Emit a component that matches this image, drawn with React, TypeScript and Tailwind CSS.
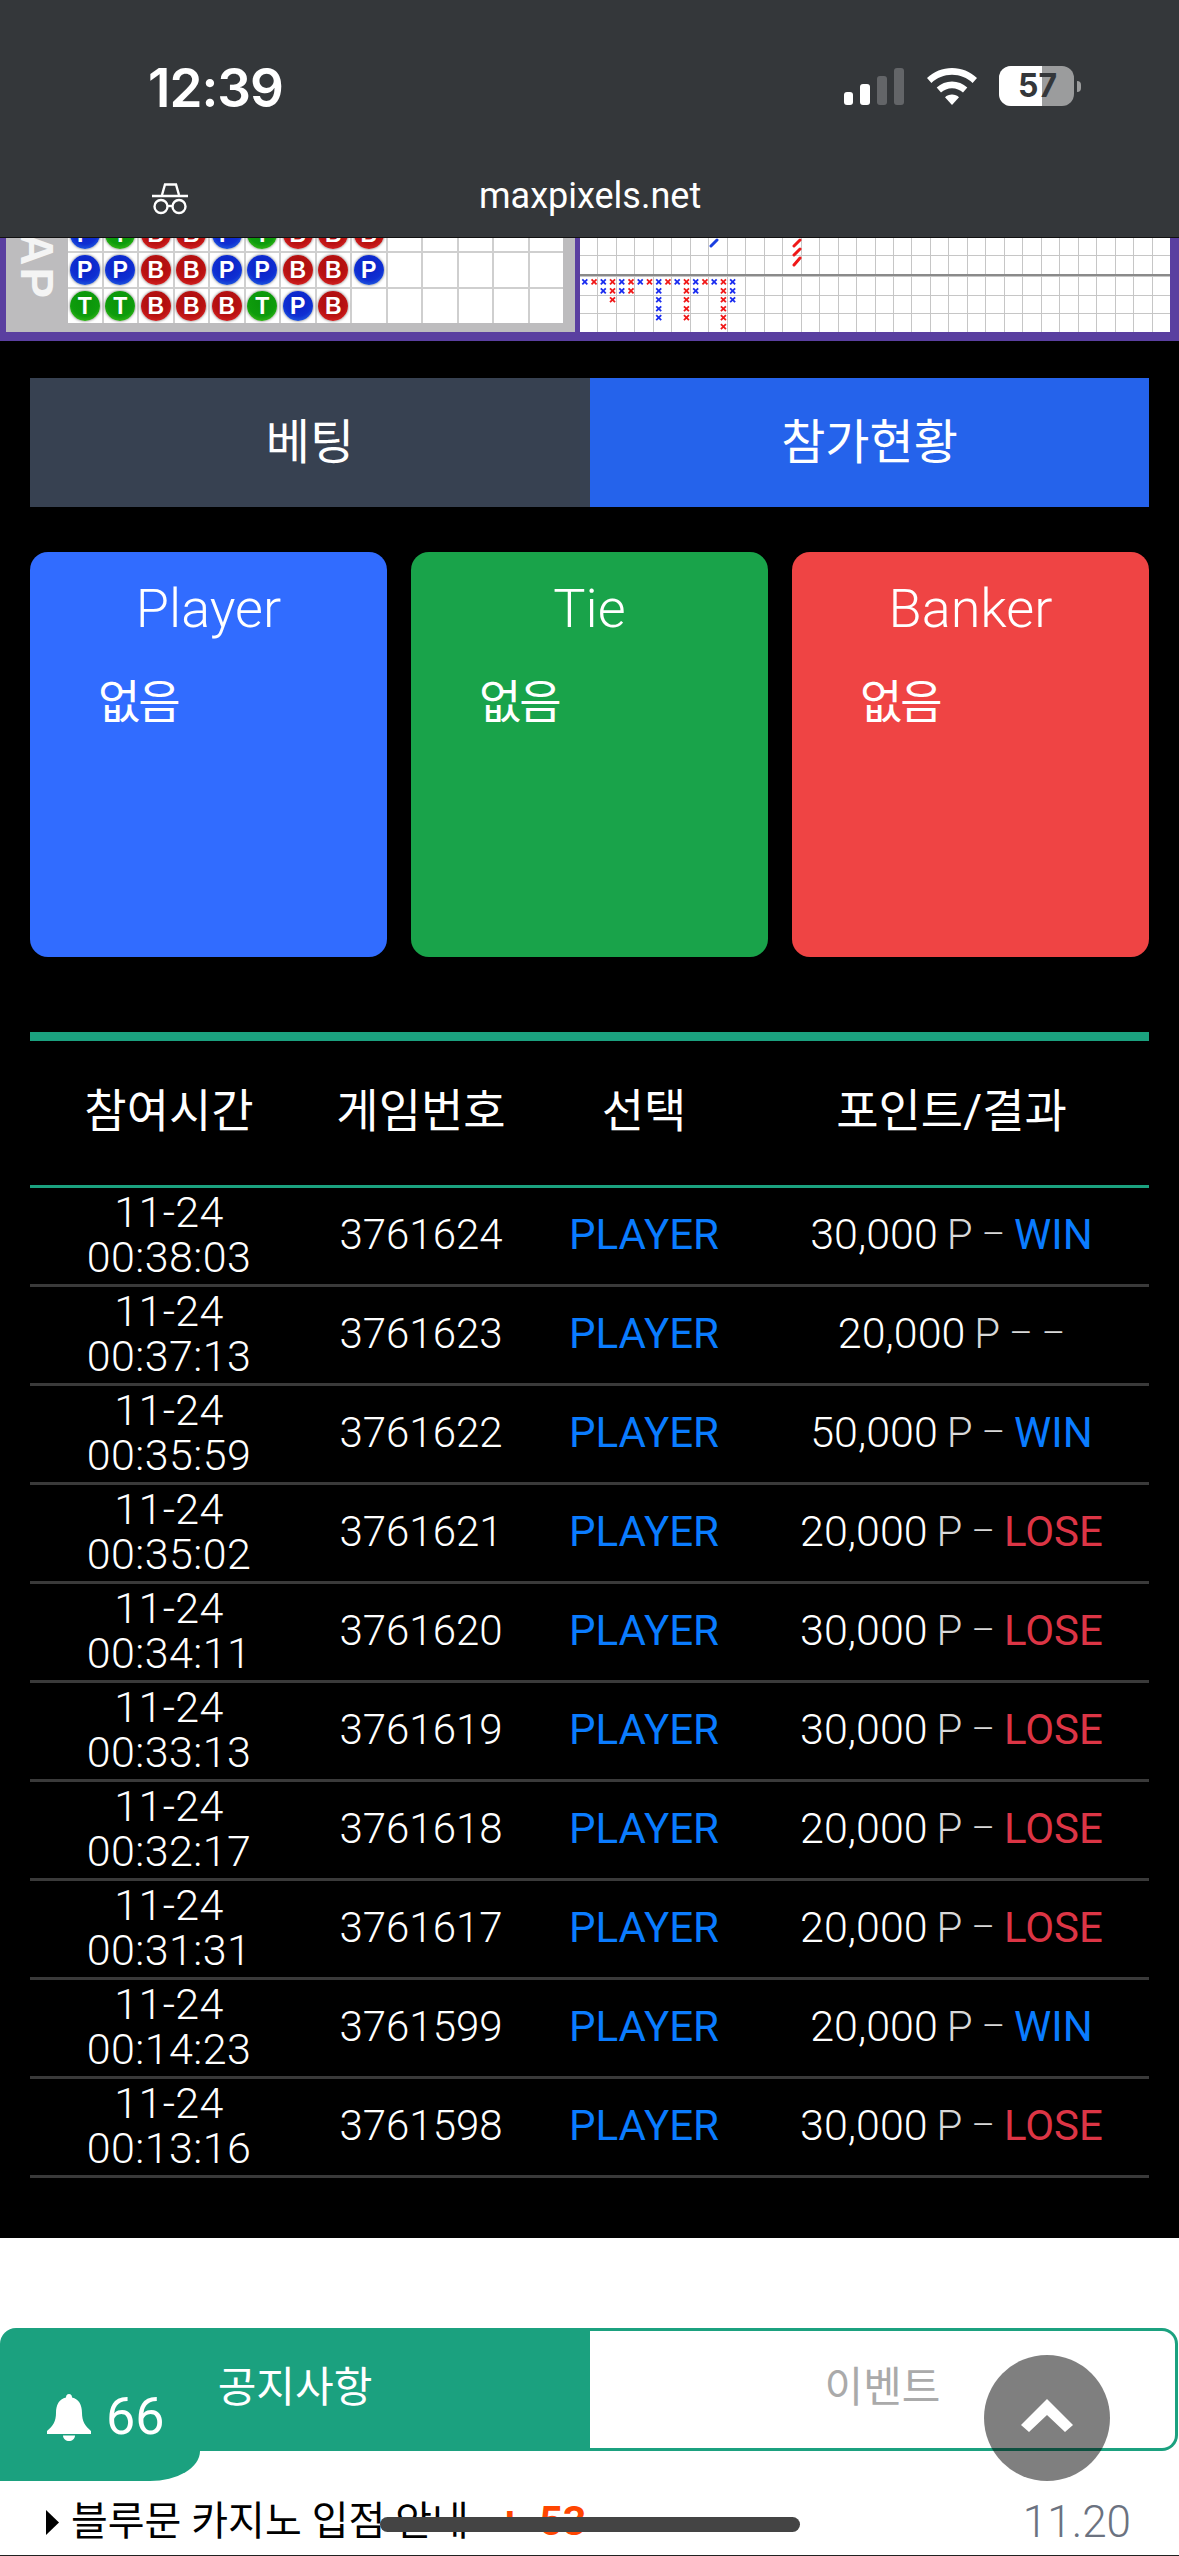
import React from 'react';

const KR = "[font-family:Roboto,'Noto_Sans_CJK_KR',sans-serif]";

const leftRows = ['PTBBPTBBB', 'PPBBPPBBP', 'TTBBBTPB'];

const rows = [
  ['00:38:03', '3761624', '30,000', 'WIN'],
  ['00:37:13', '3761623', '20,000', '-'],
  ['00:35:59', '3761622', '50,000', 'WIN'],
  ['00:35:02', '3761621', '20,000', 'LOSE'],
  ['00:34:11', '3761620', '30,000', 'LOSE'],
  ['00:33:13', '3761619', '30,000', 'LOSE'],
  ['00:32:17', '3761618', '20,000', 'LOSE'],
  ['00:31:31', '3761617', '20,000', 'LOSE'],
  ['00:14:23', '3761599', '20,000', 'WIN'],
  ['00:13:16', '3761598', '30,000', 'LOSE'],
];

// half-cell index -> colour, per half-row of the bottom road
const marks = [
  'BRBRBRBRBRBRBRBRB',
  '..BRBR..B..RB..RB',
  '...R....B..R...RB',
  '........B..R...R.',
  '........B..R...R.',
  '...............R.',
];

const Ball = ({ k }: { k: string }) => {
  const bg =
    k === 'P'
      ? 'bg-[radial-gradient(circle_at_50%_38%,#0a1fc4_0%,#0f2fd2_58%,#2f7ee8_100%)]'
      : k === 'B'
        ? 'bg-[radial-gradient(circle_at_50%_38%,#a30d0d_0%,#bb1212_58%,#e83030_100%)]'
        : 'bg-[radial-gradient(circle_at_50%_38%,#0a930a_0%,#0e9c0c_58%,#55cc22_100%)]';
  return (
    <div className={`w-[30px] h-[30px] rounded-full flex items-center justify-center text-white text-[23px] font-bold leading-none shadow-[0_0_3px_rgba(0,0,0,0.6)] font-['Liberation_Sans',sans-serif] ${bg}`}>
      {k}
    </div>
  );
};

const LeftRoad = () => (
  <div className="flex flex-col gap-[2px] bg-[#cfcfcf]">
    {leftRows.map((r, i) => (
      <div key={i} className={`flex gap-[2px] ${i === 0 ? 'h-[14px] items-end overflow-hidden' : 'h-[34px]'}`}>
        {Array.from({ length: 14 }).map((_, c) => (
          <div key={c} className="w-[33.5px] h-[34px] shrink-0 bg-white flex justify-center items-center">
            {r[c] ? <Ball k={r[c]} /> : null}
          </div>
        ))}
      </div>
    ))}
  </div>
);

const GridCells = ({ h, n }: { h: number; n: number }) => (
  <div className="flex flex-col gap-[1px]">
    {Array.from({ length: n }).map((_, r) => (
      <div key={r} className="flex gap-[1px]" style={{ height: h }}>
        {Array.from({ length: 32 }).map((_, c) => (
          <div key={c} className="flex-1 bg-white" />
        ))}
      </div>
    ))}
  </div>
);

const RightRoad = () => (
  <div className="flex-1 flex flex-col bg-[#c6c6c6] min-w-0">
    <div className="relative">
      <GridCells h={18} n={2} />
      <svg className="absolute inset-0 w-full h-full" viewBox="0 0 590 37" preserveAspectRatio="none">
        <g strokeWidth="3" strokeLinecap="round">
          <path d="M131 9 L137 3" stroke="#1a3fe0" />
          <path d="M214 9 L220 3 M214 18 L220 12 M214 28 L220 21" stroke="#f01818" />
        </g>
      </svg>
    </div>
    <div className="h-[2px] bg-[#8a8a8a]" />
    <div className="relative mt-[1px]">
      <GridCells h={17.6} n={3} />
      <svg className="absolute inset-0 w-full h-full" viewBox="0 0 590 56" preserveAspectRatio="none">
        {marks.flatMap((row, ry) =>
          row.split('').map((m, cx) =>
            m === '.' ? null : (
              <g key={`${ry}-${cx}`} stroke={m === 'B' ? '#1a2cf0' : '#f01818'} strokeWidth="1.8">
                <path d={`M${4.8 + cx * 9.24 - 2.5} ${5 + ry * 9.14 - 2.5} l5 5 m0 -5 l-5 5`} />
              </g>
            ),
          ),
        )}
      </svg>
    </div>
  </div>
);

const IncognitoIcon = () => (
  <svg width="36" height="32" viewBox="0 0 36 32" fill="none" stroke="#fff" strokeWidth="2.4">
    <path d="M10 12 L13 1.5 H24 L27 12" />
    <path d="M0 13 H36" />
    <circle cx="9" cy="23.5" r="6.5" />
    <circle cx="27" cy="23.5" r="6.5" />
    <path d="M15 23 H21" />
  </svg>
);

const StatusIcons = () => (
  <div className="flex items-start">
    <div className="flex items-end gap-[7px] h-[37px] mt-[2px]">
      <div className="w-[9px] h-[13px] rounded-[3px] bg-white" />
      <div className="w-[10px] h-[21px] rounded-[3px] bg-white" />
      <div className="w-[10px] h-[29px] rounded-[3px] bg-[#636568]" />
      <div className="w-[10px] h-[37px] rounded-[3px] bg-[#636568]" />
    </div>
    <svg className="ml-[23px] mt-[2px]" width="50" height="37" viewBox="0 0 50 37" fill="#fff">
      <path d="M25 0 C34.5 0 43 3.6 50 10 L45.6 15 C40 9.8 33 6.8 25 6.8 C17 6.8 10 9.8 4.4 15 L0 10 C7 3.6 15.5 0 25 0 Z" />
      <path d="M25 13.5 C30.8 13.5 36 15.7 40.3 19.6 L36 24.5 C33 21.8 29.2 20.2 25 20.2 C20.8 20.2 17 21.8 14 24.5 L9.7 19.6 C14 15.7 19.2 13.5 25 13.5 Z" />
      <path d="M25 26.5 C27.8 26.5 30.2 27.5 32 29.3 L25 37 L18 29.3 C19.8 27.5 22.2 26.5 25 26.5 Z" />
    </svg>
    <div className="ml-[22px] relative w-[75px] h-[40px] rounded-[12px] overflow-hidden bg-[#9b9c9d] flex">
      <div className="w-[43px] h-full bg-white" />
      <div className="absolute inset-0 flex items-center justify-center pl-[2px] text-[#34373a] text-[32px] font-bold font-['Inter',sans-serif] leading-none">57</div>
    </div>
    <div className="ml-[3px] mt-[15px] w-[4px] h-[11px] rounded-r-full bg-[#9b9c9d]" />
  </div>
);

const Cell = ({ title, bg }: { title: string; bg: string }) => (
  <div className={`flex-1 h-[405px] rounded-[18px] text-white pt-[28px] ${bg}`}>
    <div className="text-center text-[54px] font-[350] leading-[58px]">{title}</div>
    <div className="pl-[68px] pt-[32px] text-[46px] leading-[64px] tracking-[-2px]">없음</div>
  </div>
);

const Result = ({ pts, res }: { pts: string; res: string }) => (
  <div className="flex justify-center items-center gap-[9px]">
    <span className="text-white text-[43px]">{pts}</span>
    <span className="text-[#d8d8d8]">P</span>
    <span className="text-[#d8d8d8] text-[36px]">–</span>
    {res === 'WIN' && <span className="text-[#0a7cff] font-normal">WIN</span>}
    {res === 'LOSE' && <span className="text-[#dc3545] font-normal">LOSE</span>}
    {res === '-' && <span className="text-[#d8d8d8] text-[36px]">–</span>}
  </div>
);

export default function App() {
  return (
    <div className={`w-[1179px] h-[2556px] overflow-hidden bg-white ${KR}`}>
      {/* browser chrome */}
      <div className="h-[237px] bg-[#34373a] pt-[66px] pl-[148px] pr-[98px] text-white flex flex-col">
        <div className="flex justify-between">
          <div className="text-[53px] leading-[44px] font-semibold tracking-[-1px] font-['Inter',sans-serif]">12:39</div>
          <StatusIcons />
        </div>
        <div className="mt-[73px] flex items-center h-[32px] ml-[4px] -mr-[98px]">
          <IncognitoIcon />
          <div className="ml-[291px] mb-[6px] text-[36px] leading-none">maxpixels.net</div>
        </div>
      </div>

      <div className="bg-black">
        {/* road maps */}
        <div className="h-[104px] overflow-hidden border-t border-[#111] bg-[#5a3fa0] flex flex-col justify-end pb-[9px] pl-[6px] pr-[9px]">
          <div className="flex h-[95px] items-end shrink-0">
            <div className="w-[569px] h-full bg-[#bdbcbe] flex items-start shrink-0 overflow-hidden">
              <div className="w-[62px] h-full relative overflow-hidden">
                <div className="absolute left-[14px] bottom-[32px] [writing-mode:vertical-rl] text-[#f4f4f4] text-[46px] font-bold leading-[34px] tracking-[2px] font-['Liberation_Sans',sans-serif]">MAP</div>
              </div>
              <LeftRoad />
            </div>
            <div className="w-[5px] h-full" />
            <RightRoad />
          </div>
        </div>

        <div className="px-[30px] pt-[37px]">
          <div className="flex h-[129px] text-white text-[48px]">
            <div className="w-[560px] bg-[#374151] flex items-center justify-center">베팅</div>
            <div className="flex-1 bg-[#2563eb] flex items-center justify-center">참가현황</div>
          </div>

          <div className="flex gap-[24px] mt-[45px]">
            <Cell title="Player" bg="bg-[#316cff]" />
            <Cell title="Tie" bg="bg-[#19a34a]" />
            <Cell title="Banker" bg="bg-[#ef4444]" />
          </div>

          <div className="h-[9px] bg-[#1ba17f] mt-[75px]" />
          <div className="grid grid-cols-[278px_226px_220px_1fr] h-[147px] pb-[3px] items-center text-center text-white text-[46px] border-b-[3px] border-[#1ba17f]">
            <div>참여시간</div>
            <div>게임번호</div>
            <div>선택</div>
            <div>포인트/결과</div>
          </div>
          {rows.map((r) => (
            <div key={r[1]} className="grid grid-cols-[278px_226px_220px_1fr] h-[99px] pb-[6px] items-center text-center text-white font-light text-[42px] border-b-[3px] border-[#3a3a3a]">
              <div className="leading-[45px] pt-[2px] text-[43px] tracking-[0.4px]">
                <div>11-24</div>
                <div>{r[0]}</div>
              </div>
              <div>{r[1]}</div>
              <div className="text-[#0a7cff] font-normal">PLAYER</div>
              <Result pts={r[2]} res={r[3]} />
            </div>
          ))}
          <div className="h-[60px]" />
        </div>
      </div>

      {/* notice board */}
      <div className="relative pt-[90px]">
        <div className="relative flex h-[123px] text-[42px]">
          <div className="w-[590px] bg-[#1ba17f] rounded-tl-[16px] text-white text-center pt-[34px] leading-[52px]">공지사항</div>
          <div className="flex-1 mr-[1px] border-[3px] border-l-0 border-[#1ba17f] rounded-r-[16px] text-[#aaaaaa] text-center pt-[31px] leading-[52px]">이벤트</div>
          <div className="absolute left-0 top-[123px] w-[200px] h-[30px] bg-[#1ba17f] rounded-br-[50px_30px]" />
          <div className="absolute left-[46px] top-[63px] flex items-center text-white text-[52px] leading-none">
            <svg width="46" height="47" viewBox="0 0 44 47" fill="#fff">
              <path d="M22 0 C24 0 25 1.5 25 3.5 C32 5 35 11 35 19 C35 27 38 32 44 37 L44 40 H0 L0 37 C6 32 9 27 9 19 C9 11 12 5 19 3.5 C19 1.5 20 0 22 0 Z" />
              <path d="M16 41.5 H28 C28 45 25 47 22 47 C19 47 16 45 16 41.5 Z" />
            </svg>
            <span className="ml-[14px]">66</span>
          </div>
        </div>
        <div className="absolute left-[984px] top-[117px] w-[126px] h-[126px] rounded-full bg-black/50 flex items-center justify-center">
          <svg className="mb-[5px]" width="52" height="33" viewBox="0 0 52 33" fill="#fff">
            <path d="M26 0 L52 26 L44 33 L26 16 L8 33 L0 26 Z" />
          </svg>
        </div>
        <div className="relative flex items-center h-[105px] pl-[45px] pr-[48px] pt-[38px] border-b border-[#222]">
          <svg width="14" height="25" viewBox="0 0 14 25" fill="#000"><path d="M1 0 L14 12.5 L1 25 Z" /></svg>
          <span className="ml-[12px] text-[40px] text-black">블루문 카지노 입점 안내</span>
          <span className="ml-[30px] text-[41px] font-bold text-[#ff4500] [word-spacing:8px]">+ 53</span>
          <span className="ml-auto text-[44px] font-light text-[#6b7280]">11.20</span>
          <div className="absolute left-[380px] top-[66px] w-[420px] h-[15px] rounded-full bg-[#444]" />
        </div>
      </div>
    </div>
  );
}
